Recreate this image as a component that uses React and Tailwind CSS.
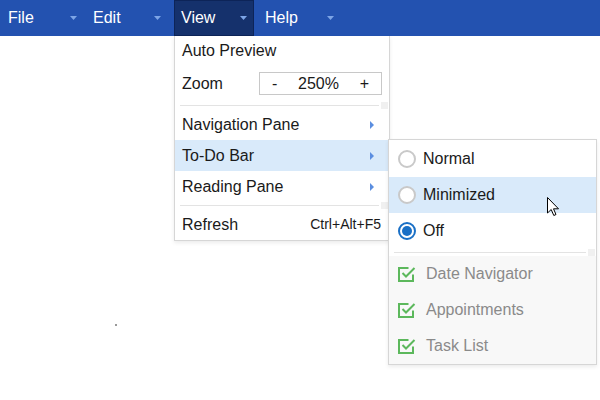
import React from 'react';

const menus = [
  { label: 'File', cls: 'w-[87px] pl-[8px] pr-[10px]' },
  { label: 'Edit', cls: 'w-[87px] pl-[6px] pr-[13px]' },
  { label: 'View', cls: 'w-[80px] pl-[6px] pr-[6px] bg-[#15316c] border border-[#0d2458]', active: true },
  { label: 'Help', cls: 'w-[86px] pl-[11px] pr-[6px]' },
];

const Caret = () => (
  <svg width="7" height="4" viewBox="0 0 7 4" className="ml-auto">
    <path d="M0 0 H7 L3.5 4 Z" fill="#7da5e6" />
  </svg>
);

const SubArrow = () => (
  <svg width="4" height="8" viewBox="0 0 4 8" className="ml-auto mr-[15px]">
    <path d="M0 0 L4 4 L0 8 Z" fill="#5b8ee0" />
  </svg>
);

const Separator = ({ h }) => (
  <div className={`flex items-center pl-[5px] pr-px ${h}`}>
    <div className="flex-1 h-px bg-[#e3e3e3]" />
    <div className="w-[7px] h-[7px] bg-[#f0f0f0] ml-[2px]" />
  </div>
);

const Radio = ({ checked }) =>
  checked ? (
    <span className="w-[18px] h-[18px] rounded-full border-2 border-[#1a70c6] flex items-center justify-center">
      <span className="w-[10px] h-[10px] rounded-full bg-[#1a70c6]" />
    </span>
  ) : (
    <span className="w-[18px] h-[18px] rounded-full border-2 border-[#c9c9c9] bg-white" />
  );

// check-square with the tick running out of the top-right corner
const Check = () => (
  <svg width="18" height="18" viewBox="0 0 18 18" className="shrink-0">
    <path d="M10.5 3 H1 V16 H15 V9.5" fill="none" stroke="#5cb85c" strokeWidth="2" />
    <path d="M4.5 8 L8 11.5 L16.5 3" fill="none" stroke="#5cb85c" strokeWidth="2" />
  </svg>
);

const Cursor = () => (
  <svg width="13" height="20" viewBox="0 0 13 20" className="absolute left-[547px] top-[197px]">
    <path d="M0.5 0.5 V16 L4.2 12.5 L6.8 18.5 L9 17.5 L6.5 11.8 H11.5 Z" fill="#fff" stroke="#000" strokeWidth="1" strokeLinejoin="round" />
  </svg>
);

export default function App() {
  return (
    <div className="relative w-[600px] h-[400px] bg-white overflow-hidden text-[16px] font-['Liberation_Sans',Arial,sans-serif]">
      <div className="flex h-[36px] bg-[#2352b0] text-white">
        {menus.map(m => (
          <div key={m.label} className={`flex items-center h-full ${m.cls}`}>
            <span>{m.label}</span>
            <Caret />
          </div>
        ))}
      </div>

      <div className="absolute left-[174px] top-[36px] w-[216px] bg-white border border-t-0 border-[#d6d6d6] shadow-[0_2px_4px_rgba(0,0,0,0.08)] text-[#1a1a1a]">
        <div className="h-[30px] flex items-center pl-[7px]">Auto Preview</div>
        <div className="h-[35px] flex items-center pl-[7px]">
          <span>Zoom</span>
          <div className="ml-auto mr-[7px] w-[123px] h-[23px] border border-[#c8c8c8] flex items-center justify-between px-[12px]">
            <span>-</span>
            <span>250%</span>
            <span>+</span>
          </div>
        </div>
        <Separator h="h-[8px]" />
        <div className="h-[31px] flex items-center pl-[7px]">
          <span>Navigation Pane</span>
          <SubArrow />
        </div>
        <div className="h-[31px] flex items-center pl-[7px] bg-[#d9eafa]">
          <span>To-Do Bar</span>
          <SubArrow />
        </div>
        <div className="h-[31px] flex items-center pl-[7px]">
          <span>Reading Pane</span>
          <SubArrow />
        </div>
        <Separator h="h-[7px]" />
        <div className="h-[31px] flex items-center pl-[7px] pr-[8px]">
          <span>Refresh</span>
          <span className="ml-auto text-[14px]">Ctrl+Alt+F5</span>
        </div>
      </div>

      <div className="absolute left-[388px] top-[139px] w-[209px] bg-white border border-[#d6d6d6] shadow-[0_2px_4px_rgba(0,0,0,0.08)] text-[#1a1a1a]">
        <div className="h-[37px] flex items-center pl-[9px] gap-[7px]">
          <Radio />
          <span>Normal</span>
        </div>
        <div className="h-[36px] flex items-center pl-[9px] gap-[7px] bg-[#d9eafa]">
          <Radio />
          <span>Minimized</span>
        </div>
        <div className="h-[36px] flex items-center pl-[9px] gap-[7px]">
          <Radio checked />
          <span>Off</span>
        </div>
        <Separator h="h-[7px]" />
        <div className="bg-[#f8f8f8] text-[#8a8a8a]">
          {['Date Navigator', 'Appointments', 'Task List'].map(t => (
            <div key={t} className="h-[36px] flex items-center pl-[9px] gap-[10px]">
              <Check />
              <span>{t}</span>
            </div>
          ))}
        </div>
      </div>

      <Cursor />
      <span className="absolute left-[115px] top-[324px] w-[2px] h-[2px] bg-[#999]" />
    </div>
  );
}
